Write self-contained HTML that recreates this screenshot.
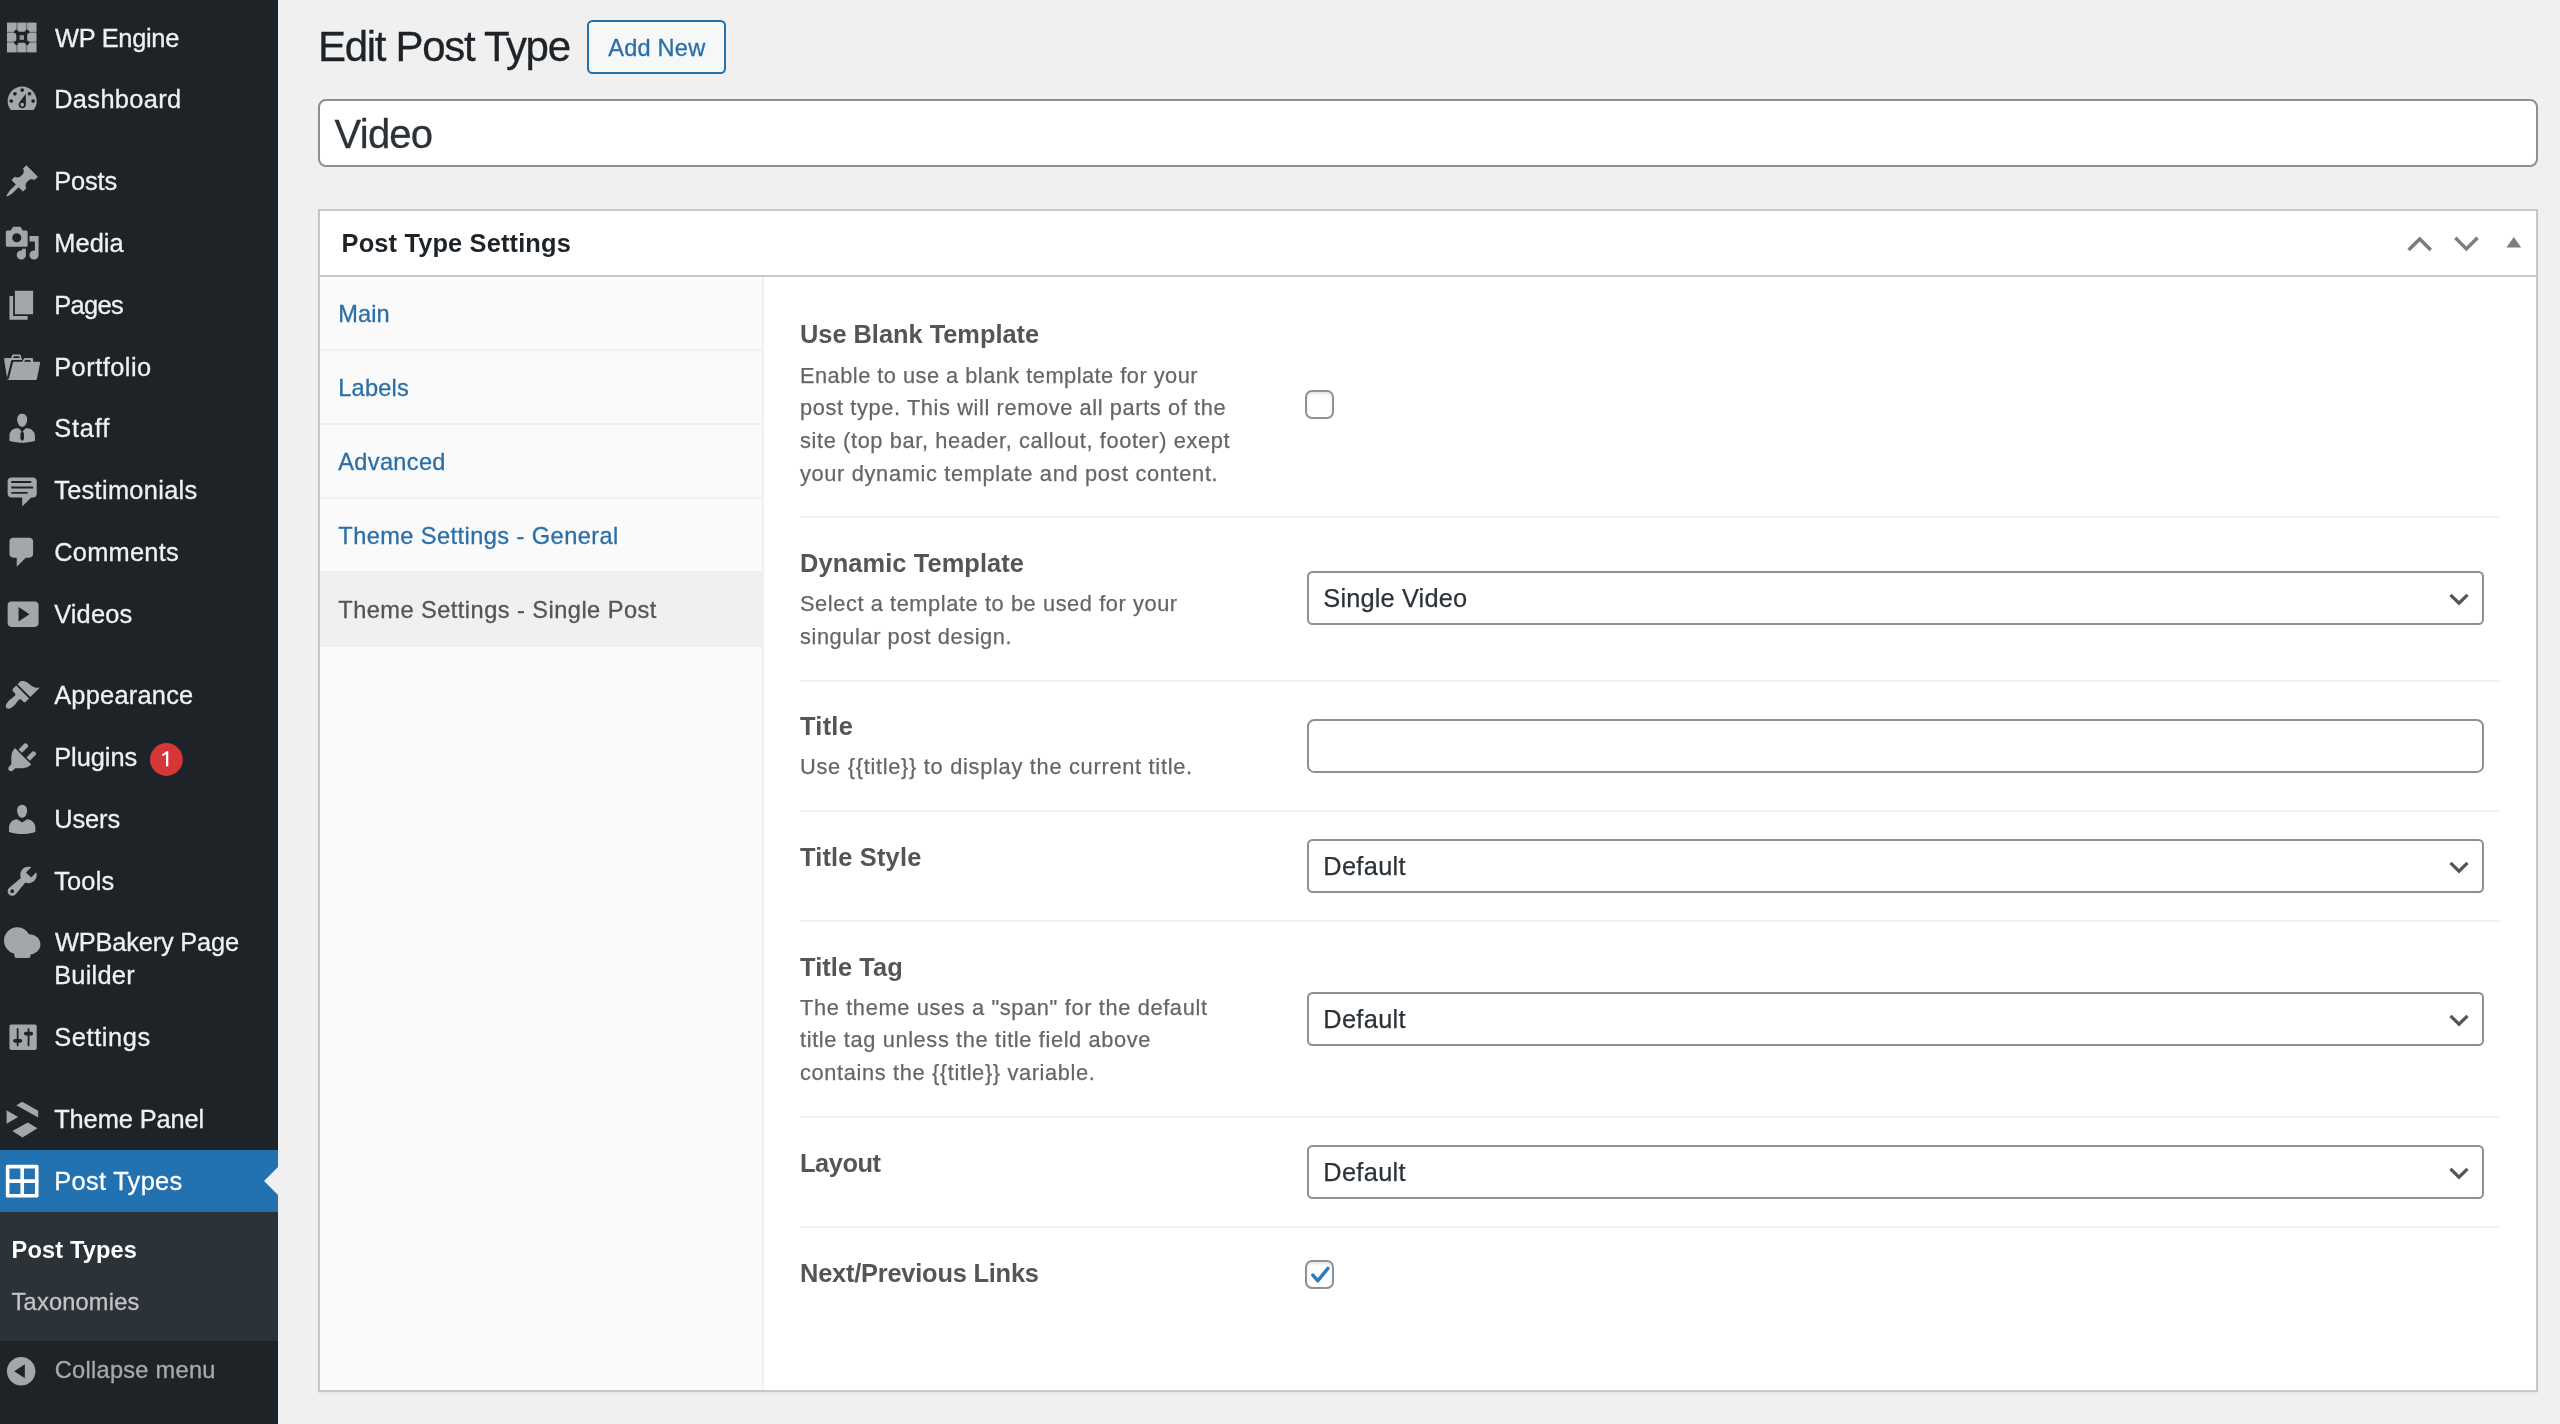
<!DOCTYPE html>
<html lang="en">
<head>
<meta charset="utf-8">
<title>Edit Post Type</title>
<style>
*{box-sizing:border-box;margin:0;padding:0}
html,body{width:2560px;height:1424px;overflow:hidden}
body{background:#f0f0f1;font-family:"Liberation Sans",sans-serif;color:#3c434a;position:relative}
span{white-space:nowrap}
#aa{position:absolute;left:0;top:0;width:2560px;height:1424px;will-change:transform}
/* ---------- sidebar ---------- */
#menu{position:absolute;left:0;top:0;width:278px;height:1424px;background:#1d2327}
.mi{position:absolute;left:0;width:278px;height:62px}
.mi svg{position:absolute;left:3.8px;top:13.4px;width:36.4px;height:36.4px;fill:#a2a7ac}
.mi .t{-webkit-text-stroke:.3px #f0f0f1;position:absolute;left:54.2px;top:.3px;line-height:62px;font-size:25.4px;color:#f0f0f1;white-space:nowrap}
.mi.cur{background:#2271b1}
.mi.cur svg{fill:#fff}
.mi.cur .t{color:#fff;-webkit-text-stroke-color:#fff}
.mi.cur:after{content:"";position:absolute;right:0;top:16.5px;border:14.6px solid transparent;border-right-color:#f0f0f1;border-left-width:0}
#sub{position:absolute;left:0;top:1212px;width:278px;height:129px;background:#2c3338}
#sub span{position:absolute;left:11.6px;font-size:23.6px;white-space:nowrap;color:#c3c4c7;line-height:30px}
.mi svg.badge{position:absolute;left:149.9px;top:16.7px;width:33px;height:33px;fill:none}
/* ---------- main ---------- */
h1{-webkit-text-stroke:.3px #1d2327;position:absolute;left:318px;top:16.4px;font-weight:400;font-size:42px;line-height:62px;color:#1d2327;white-space:nowrap}
#addnew{position:absolute;left:587px;top:20px;width:139px;height:54px;border:2px solid #2a6fa8;border-radius:5.5px;background:#f6f7f7;color:#2a6fa8;-webkit-text-stroke:.3px #2a6fa8;font-size:23.6px;line-height:50px;white-space:nowrap}
#addnew span{position:absolute;left:19.2px;top:1px}
#title{position:absolute;left:318px;top:99px;width:2220px;height:68px;border:2px solid #8c8f94;border-radius:8px;background:#fff;font-size:40px;line-height:64px;color:#2c3338;white-space:nowrap}
#title span{-webkit-text-stroke:.3px #2c3338;position:absolute;left:14.6px;top:.9px}
#box{position:absolute;left:318px;top:209px;width:2220px;height:1183px;border:2px solid #c6c7ca;background:#fff;box-shadow:0 2px 2px rgba(0,0,0,.04)}
#boxh{position:absolute;left:0;top:0;right:0;height:66px;border-bottom:2px solid #c6c7ca}
#boxh h2{position:absolute;left:21.6px;top:0;line-height:64px;font-size:25.4px;font-weight:700;color:#1d2327;white-space:nowrap}
#boxh svg{position:absolute;top:0;left:0}
#tabs{position:absolute;left:0;top:66px;width:444px;bottom:0;background:#fafafa;border-right:2px solid #f1f1f1}
.tab{position:absolute;left:0;width:444px;height:74px;border-bottom:2px solid #f0f0f0;line-height:72px;font-size:23.6px;color:#2a6fa8;white-space:nowrap}
.tab span{position:absolute;left:18.3px;top:.6px;-webkit-text-stroke:.3px #2a6fa8}
.tab.on span{-webkit-text-stroke-color:#555}
.tab.on{background:#f0f0f0;color:#555;border-bottom-color:#f0f0f1;height:76px}
/* fields (coordinates relative to #box content origin = page (320,211)) */
#f{position:absolute;left:-320px;top:-211px;width:0;height:0}
#f>*{position:absolute}
.sep{left:800px;width:1700px;height:2px;background:#f0f0f1}
.lbl{left:800px;font-size:25.4px;font-weight:700;color:#555;line-height:30px}
.desc{left:800px;font-size:21.8px;color:#666;-webkit-text-stroke:.25px #666;margin-top:-.3px;line-height:30px}
.sel,.inp{left:1307px;width:1177px;height:54px;border:2px solid #8c8f94;border-radius:7.3px;background:#fff;font-size:25.4px;line-height:50px;color:#2c3338}
.sel{border-radius:5.5px}
.sel span{position:absolute;left:14.3px;top:0;-webkit-text-stroke:.25px #2c3338}
.sel svg{position:absolute;right:12px;top:17.5px;width:22px;height:16px}
.cb{left:1305px;width:29px;height:29px;border:2px solid #909296;border-radius:7px;background:#fff;box-shadow:inset 0 2px 3px rgba(0,0,0,.1)}
.cb svg{position:absolute;left:0;top:0;width:25px;height:25px}
</style>
</head>
<body>
<div id="aa">
<div id="menu">
  <div class="mi" style="top:6px"><svg viewBox="0 0 20 20" style="overflow:visible"><defs><filter id="bl" x="-10%" y="-10%" width="120%" height="120%"><feGaussianBlur stdDeviation=".32"/></filter></defs><g filter="url(#bl)"><rect x="1.650" y="2" width="16.150" height="16.300" fill="#686d72"/><rect x="5.500" y="5.900" width="8.500" height="8.400" fill="#1d2327"/><g fill="#a4a8ab"><path d="M1.650 2h5.100v3.500L5.400 7.050H1.650z"/><path d="M7.450 2h4.600v3.900q0 1.150-1.150 1.150H8.600q-1.150 0-1.150-1.150z"/><path d="M12.750 2h5.050v5.050h-3.700L12.750 5.500z"/><path d="M1.650 7.750h3.900q1.200 0 1.200 1.150v2.350q0 1.170-1.200 1.170h-3.900z"/><path d="M17.800 7.750h-3.900q-1.150 0-1.150 1.150v2.350q0 1.170 1.150 1.170h3.900z"/><path d="M1.650 13.120H5.400l1.350 1.550V18.300h-5.100z"/><path d="M7.450 18.300h4.600v-3.900q0-1.280-1.150-1.280H8.600q-1.150 0-1.150 1.280z"/><path d="M17.800 13.120h-3.700l-1.350 1.550V18.300h5.050z"/></g><rect x="8.550" y="8.900" width="2.450" height="2.550" fill="#8f9498"/></g></svg><span class="t" style="letter-spacing:-0.28px;left:55px;top:.7px">WP Engine</span></div>
  <div class="mi" style="top:68px"><svg viewBox="0 0 20 20"><path d="M3.76 16h12.48c1.1-1.37 1.76-3.11 1.76-5 0-4.42-3.58-8-8-8s-8 3.58-8 8c0 1.89.66 3.63 1.76 5zM10 4c.55 0 1 .45 1 1s-.45 1-1 1-1-.45-1-1 .45-1 1-1zM6 6c.55 0 1 .45 1 1s-.45 1-1 1-1-.45-1-1 .45-1 1-1zm8 0c.55 0 1 .45 1 1s-.45 1-1 1-1-.45-1-1 .45-1 1-1zm-5.37 5.55L12 7v6c0 1.1-.9 2-2 2s-2-.9-2-2c0-.57.24-1.08.63-1.45zM4 10c.55 0 1 .45 1 1s-.45 1-1 1-1-.45-1-1 .45-1 1-1zm12 0c.55 0 1 .45 1 1s-.45 1-1 1-1-.45-1-1 .45-1 1-1zm-5 3c0-.55-.45-1-1-1s-1 .45-1 1 .45 1 1 1 1-.45 1-1z"/></svg><span class="t" style="letter-spacing:0.35px">Dashboard</span></div>
  <div class="mi" style="top:150px"><svg viewBox="0 0 20 20"><path d="M10.44 3.02l1.82-1.82 6.36 6.35-1.83 1.82c-1.05-.68-2.48-.57-3.41.36l-.75.75c-.92.93-1.04 2.35-.35 3.41l-1.83 1.82-2.41-2.41-2.8 2.79c-.42.42-3.38 2.71-3.8 2.29s1.86-3.39 2.28-3.81l2.79-2.79L4.1 9.36l1.83-1.82c1.05.69 2.48.57 3.4-.36l.75-.75c.93-.92 1.05-2.35.36-3.41z"/></svg><span class="t" style="letter-spacing:-0.13px">Posts</span></div>
  <div class="mi" style="top:212px"><svg viewBox="0 0 20 20"><path d="M13 11V4c0-.55-.45-1-1-1h-1.67L9 1H5L3.67 3H2c-.55 0-1 .45-1 1v7c0 .55.45 1 1 1h10c.55 0 1-.45 1-1zM7 4.5c1.38 0 2.5 1.12 2.5 2.5S8.38 9.5 7 9.5 4.5 8.38 4.5 7 5.62 4.5 7 4.5zM14 6h5v10.5c0 1.38-1.12 2.5-2.5 2.5S14 17.88 14 16.5s1.12-2.5 2.5-2.5c.17 0 .34.02.5.05V9h-3V6zm-4 8.05V13h2v3.5c0 1.38-1.12 2.5-2.5 2.5S7 17.88 7 16.5 8.12 14 9.5 14c.17 0 .34.02.5.05z"/></svg><span class="t" style="letter-spacing:0.09px">Media</span></div>
  <div class="mi" style="top:274px"><svg viewBox="0 0 20 20"><path d="M6 15V2h10v13H6zm-1 1h8v2H3V5h2v11z"/></svg><span class="t" style="letter-spacing:-0.62px">Pages</span></div>
  <div class="mi" style="top:335.5px"><svg viewBox="0 0 20 20"><path d="M4 5H.78c-.37 0-.74.32-.69.84l1.56 9.99S3.5 8.47 3.86 6.7c.11-.53.61-.7.98-.7H10s-.7-2.08-.77-2.31C9.11 3.25 8.89 3 8.45 3H5.14c-.36 0-.7.23-.8.64C4.25 4.04 4 5 4 5zm4.88 0h-4s.42-1 .87-1h2.13c.48 0 1 1 1 1zM2.67 16.25c-.31.47-.76.75-1.26.75h15.73c.54 0 .92-.31 1.03-.83.44-2.19 1.68-8.44 1.68-8.44.07-.5-.3-.73-.62-.73H16V5.53c0-.16-.26-.53-.66-.53h-3.76c-.52 0-.87.58-.87.58L10 7H5.59c-.32 0-.63.19-.69.5 0 0-1.59 6.7-2.23 8.75zM14.9 7h-3.87s.45-1 .87-1h2.16c.48 0 .84 1 .84 1z"/></svg><span class="t" style="letter-spacing:0.48px">Portfolio</span></div>
  <div class="mi" style="top:397px"><svg viewBox="0 0 20 20"><path d="M7.3 6l-.03-.19c-.04-.37-.05-.73-.03-1.08.02-.36.1-.71.25-1.04.14-.32.31-.61.52-.86s.49-.46.83-.6c.34-.15.72-.23 1.13-.23.69 0 1.26.2 1.71.59s.76.87.91 1.44.18 1.16.09 1.78l-.03.19c-.01.09-.05.25-.11.48-.05.24-.12.47-.2.69-.08.21-.19.45-.34.72-.14.27-.3.49-.47.69-.18.19-.4.34-.67.48-.27.13-.55.19-.86.19s-.59-.06-.87-.19c-.26-.13-.49-.29-.67-.5-.18-.2-.34-.42-.49-.66-.15-.25-.26-.49-.34-.73-.09-.25-.16-.47-.21-.67-.06-.21-.1-.37-.12-.5zm9.2 6.24c.41.7.5 1.41.5 2.14v2.49c0 .03-.12.08-.29.13-.18.04-.42.13-.97.27-.55.12-1.1.24-1.65.34s-1.19.19-1.95.27c-.75.08-1.46.12-2.13.12-.68 0-1.39-.04-2.14-.12-.75-.07-1.4-.17-1.98-.27-.58-.11-1.08-.23-1.56-.34-.49-.11-.8-.21-1.06-.29L3 16.87v-2.49c0-.75.07-1.46.46-2.15s.81-1.25 1.5-1.68C5.66 10.12 7.19 10 8 10l1.67 1.67L9 13v3l1.02 1.08L11 16v-3l-.68-1.33L11.97 10c.77 0 2.2.07 2.9.52.71.45 1.21 1.02 1.63 1.72z"/></svg><span class="t" style="letter-spacing:0.81px">Staff</span></div>
  <div class="mi" style="top:459px"><svg viewBox="0 0 20 20"><path d="M4 3h12c.55 0 1.02.2 1.41.59S18 4.45 18 5v7c0 .55-.2 1.02-.59 1.41S16.55 14 16 14h-1l-5 5v-5H4c-.55 0-1.02-.2-1.41-.59S2 12.55 2 12V5c0-.55.2-1.02.59-1.41S3.45 3 4 3zm11 2H4v1h11V5zm1 3H4v1h12V8zm-3 3H4v1h9v-1z"/></svg><span class="t" style="letter-spacing:0.3px">Testimonials</span></div>
  <div class="mi" style="top:521px"><svg viewBox="0 0 20 20"><path d="M5 2h9c1.1 0 2 .9 2 2v7c0 1.1-.9 2-2 2h-2l-5 5v-5H5c-1.1 0-2-.9-2-2V4c0-1.1.9-2 2-2z"/></svg><span class="t" style="letter-spacing:0.25px">Comments</span></div>
  <div class="mi" style="top:583px"><svg viewBox="0 0 20 20"><path d="M19 15V5c0-1.1-.9-2-2-2H4c-1.1 0-2 .9-2 2v10c0 1.1.9 2 2 2h13c1.1 0 2-.9 2-2zM8 14V6l6 4z"/></svg><span class="t" style="letter-spacing:0.16px">Videos</span></div>
  <div class="mi" style="top:664px"><svg viewBox="0 0 20 20"><path d="M14.48 11.06L7.41 3.99l1.5-1.5c.5-.56 2.3-.47 3.51.32 1.21.8 1.43 1.28 2.91 2.1 1.18.64 2.45 1.26 4.45.85zm-.71.71L6.7 4.7 4.93 6.47c-.39.39-.39 1.02 0 1.41l1.06 1.06c.39.39.39 1.03 0 1.42-.6.6-1.43 1.11-2.21 1.69-.35.26-.7.53-1.01.84C1.43 14.23.4 16.08 1.4 17.07c.99 1 2.84-.03 4.18-1.36.31-.31.58-.66.85-1.02.57-.78 1.08-1.61 1.69-2.21.39-.39 1.02-.39 1.41 0l1.06 1.06c.39.39 1.02.39 1.41 0z"/></svg><span class="t" style="letter-spacing:0.23px">Appearance</span></div>
  <div class="mi" style="top:726px"><svg viewBox="0 0 20 20"><path d="M13.11 4.36L9.87 7.6 8 5.73l3.24-3.24c.35-.34 1.05-.2 1.56.32.52.51.66 1.21.31 1.55zm-8 1.77l.91-1.12 9.01 9.01-1.19.84c-.71.71-2.63 1.16-3.82 1.16H6.14L4.9 17.26c-.59.59-1.54.59-2.12 0-.59-.58-.59-1.53 0-2.12l1.24-1.24v-3.88c0-1.13.4-3.19 1.09-3.89zm7.26 3.97l3.24-3.24c.34-.35 1.04-.21 1.55.31.52.51.66 1.21.31 1.55l-3.24 3.25z"/></svg><span class="t" style="letter-spacing:-0.05px">Plugins</span><svg class="badge" viewBox="0 0 33 33"><circle cx="16.4" cy="16.5" r="16.4" fill="#d63638"/><path d="M18.300 8.200v15h-2.300V11l-3.100 2.300-1.100-1.600 4.700-3.500z" fill="#fff"/></svg></div>
  <div class="mi" style="top:788px"><svg viewBox="0 0 20 20"><path d="M10 9.25c-2.27 0-2.73-3.44-2.73-3.44C7 4.02 7.82 2 9.97 2c2.16 0 2.98 2.02 2.71 3.81 0 0-.41 3.44-2.68 3.44zm0 2.57L12.72 10c2.39 0 4.52 2.33 4.52 4.53v2.49s-3.65 1.13-7.24 1.13c-3.65 0-7.24-1.13-7.24-1.13v-2.49c0-2.25 1.94-4.48 4.47-4.48z"/></svg><span class="t" style="letter-spacing:-0.08px">Users</span></div>
  <div class="mi" style="top:849.5px"><svg viewBox="0 0 20 20"><path d="M16.68 9.77c-1.34 1.34-3.3 1.67-4.95.99l-5.41 6.52c-.99.99-2.59.99-3.58 0s-.99-2.59 0-3.57l6.52-5.42c-.68-1.65-.35-3.61.99-4.95 1.28-1.28 3.12-1.62 4.72-1.06l-2.89 2.89 2.82 2.82 2.86-2.87c.53 1.58.18 3.39-1.08 4.65zM3.81 16.21c.4.39 1.04.39 1.43 0 .4-.4.4-1.04 0-1.43-.39-.4-1.03-.4-1.43 0-.39.39-.39 1.03 0 1.43z"/></svg><span class="t" style="letter-spacing:0.18px">Tools</span></div>
  <div class="mi" style="top:911px;height:95px"><svg viewBox="0 0 20 20" style="overflow:visible"><circle cx="7.3" cy="9.1" r="7.3"/><ellipse cx="14.05" cy="11.15" rx="5.95" ry="5.55"/><rect x="5.7" y="13" width="8.9" height="5.7" rx="1.2"/></svg><span class="t" style="letter-spacing:-0.19px;line-height:33px;top:14.5px;left:55px">WPBakery Page</span><span class="t" style="letter-spacing:0.24px;line-height:33px;top:47.5px">Builder</span></div>
  <div class="mi" style="top:1006px"><svg viewBox="0 0 20 20"><path d="M18 16V4c0-.55-.45-1-1-1H4c-.55 0-1 .45-1 1v12c0 .55.45 1 1 1h13c.55 0 1-.45 1-1zM8 11h1c.55 0 1 .45 1 1s-.45 1-1 1H8v1.5c0 .28-.22.5-.5.5s-.5-.22-.5-.5V13H6c-.55 0-1-.45-1-1s.45-1 1-1h1V5.500c0-.28.22-.5.5-.5s.5.22.5.5V11zm5-2h-1c-.55 0-1-.45-1-1s.45-1 1-1h1V5.500c0-.28.22-.5.5-.5s.5.22.5.5V7h1c.55 0 1 .45 1 1s-.45 1-1 1h-1v5.500c0 .28-.22.5-.5.5s-.5-.22-.5-.5V9z"/></svg><span class="t" style="letter-spacing:0.61px">Settings</span></div>
  <div class="mi" style="top:1088px"><svg viewBox="0 0 20 20" style="overflow:visible"><path d="M1.400 5.100l6.350 3.700-6.300 3.700zM6.750 2.400l3.250-2 8.800 4.900v3.700zM4.600 16.500l8.500-4.750 5.300 3.250-8.250 5z"/></svg><span class="t" style="letter-spacing:-0.1px">Theme Panel</span></div>
  <div class="mi cur" style="top:1150px;height:62px"><svg viewBox="0 0 20 20"><path d="M2 1h16c.55 0 1 .45 1 1v16c0 .55-.45 1-1 1H2c-.55 0-1-.45-1-1V2c0-.55.45-1 1-1zm7.010 7.990v-6H3v6h6.010zm8 0v-6h-6v6h6zm-8 8.010v-6H3v6h6.010zm8 0v-6h-6v6h6z"/></svg><span class="t" style="letter-spacing:0.32px;top:-.5px">Post Types</span></div>
  <div id="sub"><span style="letter-spacing:0.13px;top:23.2px;font-weight:700;color:#fff">Post Types</span><span style="letter-spacing:0.2px;top:74.7px;-webkit-text-stroke:.3px #c3c4c7">Taxonomies</span></div>
  <div class="mi" style="top:1339.800px"><svg viewBox="0 0 20 20" style="left:3.200px"><path d="M10 2.160c4.330 0 7.840 3.510 7.840 7.840s-3.510 7.840-7.840 7.840S2.160 14.330 2.160 10 5.670 2.160 10 2.160zm2 11.720V6.120L6.180 9.970z"/></svg><span class="t" style="letter-spacing:0.27px;color:#a7aaad;-webkit-text-stroke-color:#a7aaad;font-size:23.6px;top:-1.100px;left:54.800px">Collapse menu</span></div>
</div>
<h1><span style="letter-spacing:-1.31px">Edit Post Type</span></h1>
<div id="addnew"><span style="letter-spacing:0.21px">Add New</span></div>
<div id="title"><span style="letter-spacing:-0.77px">Video</span></div>
<div id="box">
  <div id="boxh"><h2><span style="letter-spacing:0.15px">Post Type Settings</span></h2>
    <svg width="2216" height="64" viewBox="0 0 2216 64"><g fill="none" stroke="#7b7d80" stroke-width="3.5"><path d="M2088.600 39.100l11.100-11.100 11.100 11.100"/><path d="M2135.300 26.800l11.100 11.100 11.100-11.100"/></g><path d="M2186.400 36.600h14.800l-7.400-10.600z" fill="#7b7d80"/></svg>
  </div>
  <div id="tabs">
    <div class="tab" style="top:0"><span style="letter-spacing:0.09px">Main</span></div>
    <div class="tab" style="top:74px"><span style="letter-spacing:0.17px">Labels</span></div>
    <div class="tab" style="top:148px"><span style="letter-spacing:0.32px">Advanced</span></div>
    <div class="tab" style="top:222px"><span style="letter-spacing:0.43px">Theme Settings - General</span></div>
    <div class="tab on" style="top:294px;line-height:76px"><span style="letter-spacing:0.46px">Theme Settings - Single Post</span></div>
  </div>
  <div id="f">
    <span class="lbl" style="letter-spacing:-0.02px;top:319px">Use Blank Template</span>
    <span class="desc" style="letter-spacing:0.48px;top:361px">Enable to use a blank template for your</span>
    <span class="desc" style="letter-spacing:0.61px;top:393.700px">post type. This will remove all parts of the</span>
    <span class="desc" style="letter-spacing:0.62px;top:426.400px">site (top bar, header, callout, footer) exept</span>
    <span class="desc" style="letter-spacing:0.66px;top:459.100px">your dynamic template and post content.</span>
    <div class="cb" style="top:390px"></div>
    <div class="sep" style="top:516px"></div>

    <span class="lbl" style="letter-spacing:0.1px;top:548px">Dynamic Template</span>
    <span class="desc" style="letter-spacing:0.58px;top:589px">Select a template to be used for your</span>
    <span class="desc" style="letter-spacing:0.58px;top:622.700px">singular post design.</span>
    <div class="sel" style="top:571px"><span style="letter-spacing:0.15px">Single Video</span><svg viewBox="0 0 22 16"><path d="M2.500 3.800l8.500 8.400 8.500-8.400" fill="none" stroke="#555" stroke-width="3.200"/></svg></div>
    <div class="sep" style="top:680px"></div>

    <span class="lbl" style="letter-spacing:0.26px;top:710.800px">Title</span>
    <span class="desc" style="letter-spacing:0.71px;top:752.400px">Use {{title}} to display the current title.</span>
    <div class="inp" style="top:719px"></div>
    <div class="sep" style="top:810px"></div>

    <span class="lbl" style="letter-spacing:0.18px;top:842.200px">Title Style</span>
    <div class="sel" style="top:839px"><span style="letter-spacing:0.3px">Default</span><svg viewBox="0 0 22 16"><path d="M2.500 3.800l8.500 8.400 8.500-8.400" fill="none" stroke="#555" stroke-width="3.200"/></svg></div>
    <div class="sep" style="top:920px"></div>

    <span class="lbl" style="letter-spacing:0.09px;top:951.500px">Title Tag</span>
    <span class="desc" style="letter-spacing:0.64px;top:993px">The theme uses a "span" for the default</span>
    <span class="desc" style="letter-spacing:0.63px;top:1025.700px">title tag unless the title field above</span>
    <span class="desc" style="letter-spacing:0.64px;top:1058.400px">contains the {{title}} variable.</span>
    <div class="sel" style="top:992px"><span style="letter-spacing:0.3px">Default</span><svg viewBox="0 0 22 16"><path d="M2.500 3.800l8.500 8.400 8.500-8.400" fill="none" stroke="#555" stroke-width="3.200"/></svg></div>
    <div class="sep" style="top:1116px"></div>

    <span class="lbl" style="letter-spacing:-0.45px;top:1148px">Layout</span>
    <div class="sel" style="top:1145px"><span style="letter-spacing:0.3px">Default</span><svg viewBox="0 0 22 16"><path d="M2.500 3.800l8.500 8.400 8.500-8.400" fill="none" stroke="#555" stroke-width="3.200"/></svg></div>
    <div class="sep" style="top:1226px"></div>

    <span class="lbl" style="letter-spacing:-0.21px;top:1258px">Next/Previous Links</span>
    <div class="cb" style="top:1260px"><svg viewBox="0 0 25 25"><path d="M5.800 13.100L10.900 18.700 20.900 6.400" fill="none" stroke="#2f7bc0" stroke-width="3.500" stroke-linecap="round" stroke-linejoin="round"/></svg></div>
  </div>
</div>
</div>
</body>
</html>
